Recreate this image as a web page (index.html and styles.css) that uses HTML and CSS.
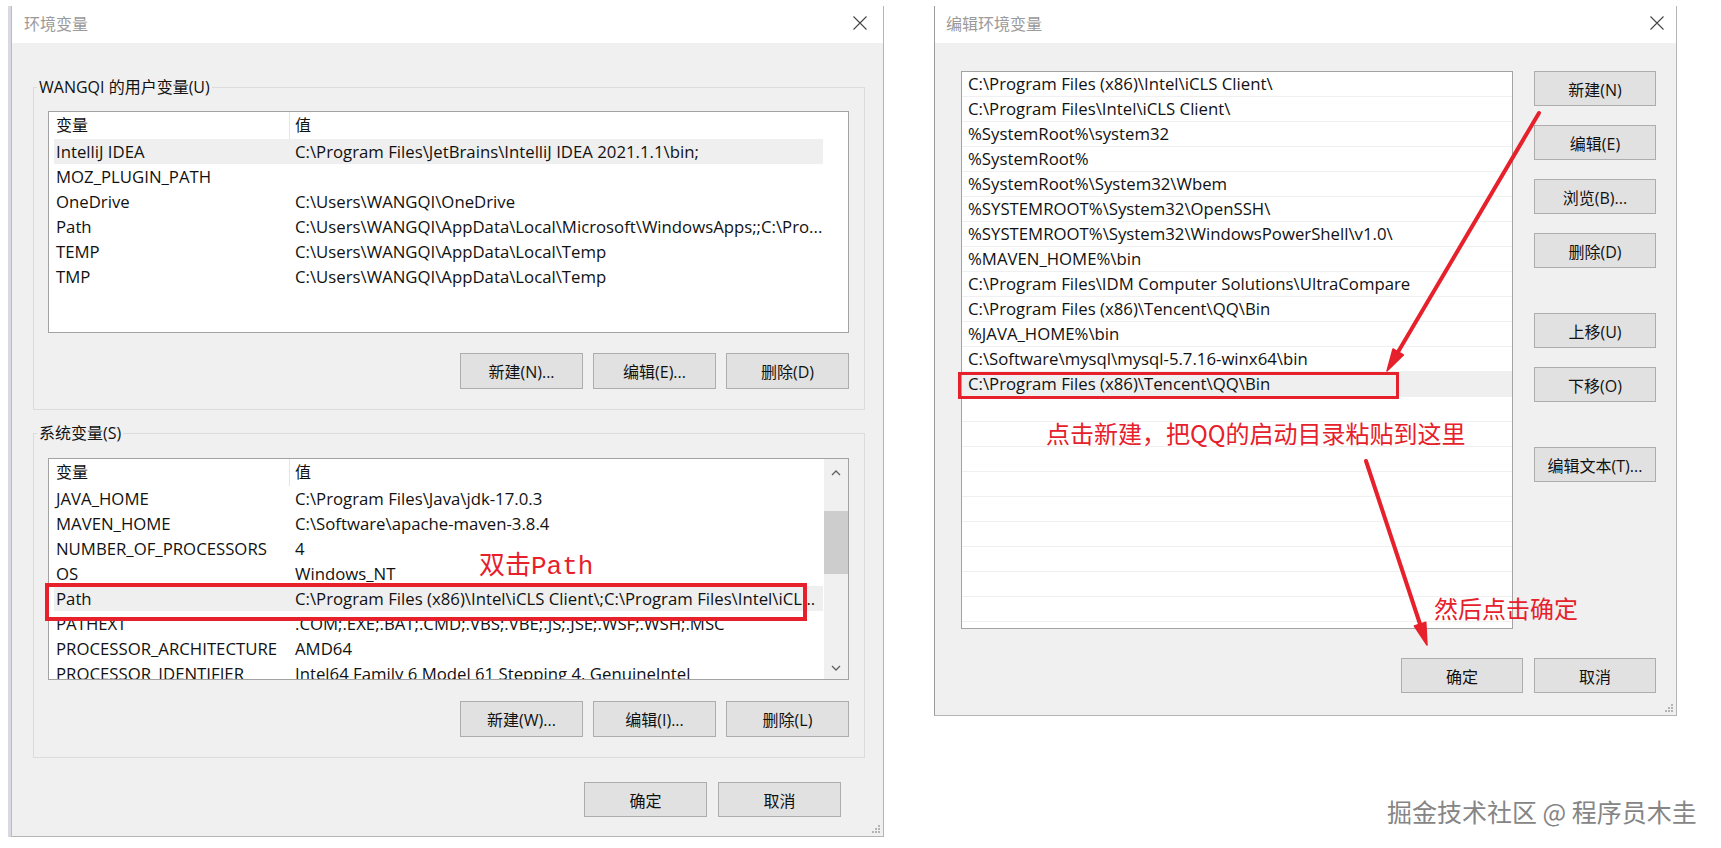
FILE: index.html
```html
<!DOCTYPE html>
<html lang="zh-CN">
<head>
<meta charset="utf-8">
<title>环境变量</title>
<link rel="stylesheet" href="styles.css">
</head>
<body>
<div class="stage">

  <!-- 环境变量 dialog -->
  <section class="win win-env">
    <header class="titlebar">
      <span class="title">环境变量</span>
      <svg class="close" width="14" height="14" viewBox="0 0 14 14"><path d="M0.5 0.5 L13.5 13.5 M13.5 0.5 L0.5 13.5" stroke="#444" stroke-width="1.1" fill="none"/></svg>
    </header>
    <div class="win-body env-body">

      <div class="group">
        <span class="legend">WANGQI 的用户变量(U)</span>
        <div class="listview">
          <div class="lv-main">
            <div class="lv-head"><span class="c1">变量</span><span class="c2">值</span></div>
            <div class="lv-row sel"><span class="c1">IntelliJ IDEA</span><span class="c2">C:\Program Files\JetBrains\IntelliJ IDEA 2021.1.1\bin;</span></div>
            <div class="lv-row"><span class="c1">MOZ_PLUGIN_PATH</span><span class="c2"></span></div>
            <div class="lv-row"><span class="c1">OneDrive</span><span class="c2">C:\Users\WANGQI\OneDrive</span></div>
            <div class="lv-row"><span class="c1">Path</span><span class="c2">C:\Users\WANGQI\AppData\Local\Microsoft\WindowsApps;;C:\Pro...</span></div>
            <div class="lv-row"><span class="c1">TEMP</span><span class="c2">C:\Users\WANGQI\AppData\Local\Temp</span></div>
            <div class="lv-row"><span class="c1">TMP</span><span class="c2">C:\Users\WANGQI\AppData\Local\Temp</span></div>
          </div>
        </div>
        <div class="btn-row">
          <button class="btn">新建(N)...</button>
          <button class="btn">编辑(E)...</button>
          <button class="btn">删除(D)</button>
        </div>
      </div>

      <div class="group group-sys">
        <span class="legend">系统变量(S)</span>
        <div class="listview">
          <div class="lv-main">
            <div class="lv-head"><span class="c1">变量</span><span class="c2">值</span></div>
            <div class="lv-row"><span class="c1">JAVA_HOME</span><span class="c2">C:\Program Files\Java\jdk-17.0.3</span></div>
            <div class="lv-row"><span class="c1">MAVEN_HOME</span><span class="c2">C:\Software\apache-maven-3.8.4</span></div>
            <div class="lv-row"><span class="c1">NUMBER_OF_PROCESSORS</span><span class="c2">4</span></div>
            <div class="lv-row"><span class="c1">OS</span><span class="c2">Windows_NT</span></div>
            <div class="lv-row sel"><span class="c1">Path</span><span class="c2">C:\Program Files (x86)\Intel\iCLS Client\;C:\Program Files\Intel\iCL...</span></div>
            <div class="lv-row"><span class="c1">PATHEXT</span><span class="c2">.COM;.EXE;.BAT;.CMD;.VBS;.VBE;.JS;.JSE;.WSF;.WSH;.MSC</span></div>
            <div class="lv-row"><span class="c1">PROCESSOR_ARCHITECTURE</span><span class="c2">AMD64</span></div>
            <div class="lv-row"><span class="c1">PROCESSOR_IDENTIFIER</span><span class="c2">Intel64 Family 6 Model 61 Stepping 4, GenuineIntel</span></div>
          </div>
          <div class="vscroll">
            <div class="sb-arrow sb-up"><svg width="10" height="6" viewBox="0 0 10 6"><path d="M1 5 L5 1 L9 5" stroke="#606060" stroke-width="1.3" fill="none"/></svg></div>
            <div class="sb-thumb"></div>
            <div class="sb-arrow sb-down"><svg width="10" height="6" viewBox="0 0 10 6"><path d="M1 1 L5 5 L9 1" stroke="#606060" stroke-width="1.3" fill="none"/></svg></div>
          </div>
        </div>
        <div class="btn-row">
          <button class="btn">新建(W)...</button>
          <button class="btn">编辑(I)...</button>
          <button class="btn">删除(L)</button>
        </div>
      </div>

      <div class="footer env-footer">
        <button class="btn btn-footer">确定</button>
        <button class="btn btn-footer">取消</button>
      </div>
    </div>
    <svg class="grip" width="10" height="10" viewBox="0 0 10 10"><path d="M7 1h2v2h-2z M4 4h2v2h-2z M7 4h2v2h-2z M1 7h2v2h-2z M4 7h2v2h-2z M7 7h2v2h-2z" fill="#b4b4b4"/></svg>
  </section>

  <!-- 编辑环境变量 dialog -->
  <section class="win win-edit">
    <header class="titlebar titlebar-edit">
      <span class="title">编辑环境变量</span>
      <svg class="close" width="14" height="14" viewBox="0 0 14 14"><path d="M0.5 0.5 L13.5 13.5 M13.5 0.5 L0.5 13.5" stroke="#444" stroke-width="1.1" fill="none"/></svg>
    </header>
    <div class="win-body edit-body">
      <div class="edit-main">
        <div class="pathlist">
          <div class="pl-row">C:\Program Files (x86)\Intel\iCLS Client\</div>
          <div class="pl-row">C:\Program Files\Intel\iCLS Client\</div>
          <div class="pl-row">%SystemRoot%\system32</div>
          <div class="pl-row">%SystemRoot%</div>
          <div class="pl-row">%SystemRoot%\System32\Wbem</div>
          <div class="pl-row">%SYSTEMROOT%\System32\OpenSSH\</div>
          <div class="pl-row">%SYSTEMROOT%\System32\WindowsPowerShell\v1.0\</div>
          <div class="pl-row">%MAVEN_HOME%\bin</div>
          <div class="pl-row">C:\Program Files\IDM Computer Solutions\UltraCompare</div>
          <div class="pl-row">C:\Program Files (x86)\Tencent\QQ\Bin</div>
          <div class="pl-row">%JAVA_HOME%\bin</div>
          <div class="pl-row">C:\Software\mysql\mysql-5.7.16-winx64\bin</div>
          <div class="pl-row sel">C:\Program Files (x86)\Tencent\QQ\Bin</div>
          <div class="pl-row"></div>
          <div class="pl-row"></div>
          <div class="pl-row"></div>
          <div class="pl-row"></div>
          <div class="pl-row"></div>
          <div class="pl-row"></div>
          <div class="pl-row"></div>
          <div class="pl-row"></div>
          <div class="pl-row"></div>
          <div class="pl-row"></div>
        </div>
        <div class="side-btns">
          <button class="btn btn-side">新建(N)</button>
          <button class="btn btn-side">编辑(E)</button>
          <button class="btn btn-side">浏览(B)...</button>
          <button class="btn btn-side">删除(D)</button>
          <button class="btn btn-side gap-before">上移(U)</button>
          <button class="btn btn-side">下移(O)</button>
          <button class="btn btn-side gap-before">编辑文本(T)...</button>
        </div>
      </div>
      <div class="footer edit-footer">
        <button class="btn btn-side">确定</button>
        <button class="btn btn-side">取消</button>
      </div>
    </div>
    <svg class="grip" width="10" height="10" viewBox="0 0 10 10"><path d="M7 1h2v2h-2z M4 4h2v2h-2z M7 4h2v2h-2z M1 7h2v2h-2z M4 7h2v2h-2z M7 7h2v2h-2z" fill="#b4b4b4"/></svg>
  </section>

  <!-- red annotations drawn over both dialogs -->
  <div class="mark mark-path"></div>
  <div class="mark mark-qq"></div>
  <div class="note note-dbl">双击Path</div>
  <div class="note note-new">点击新建，把QQ的启动目录粘贴到这里</div>
  <div class="note note-ok">然后点击确定</div>
  <svg class="arrows" width="1721" height="848" viewBox="0 0 1721 848">
    <g stroke="#e6212b" stroke-width="4" stroke-linecap="round" fill="#e6212b">
      <line x1="1539" y1="113" x2="1398" y2="352"/>
      <polygon points="1387,371 1403.4,355 1393,349" stroke-width="1.5" stroke-linejoin="round"/>
      <line x1="1366" y1="461" x2="1420" y2="624"/>
      <polygon points="1427,645 1425.8,622.2 1414.4,626" stroke-width="1.5" stroke-linejoin="round"/>
    </g>
  </svg>
  <div class="watermark">掘金技术社区 @ 程序员木圭</div>
</div>
</body>
</html>
```

FILE: styles.css
```css
html, body {
  margin: 0;
  padding: 0;
  background: #ffffff;
}

body {
  font-family: "Open Sans", "Noto Sans CJK SC", sans-serif;
  font-size: 16px;
  color: #111;
}

.stage {
  position: relative;
  width: 1721px;
  height: 848px;
  box-sizing: border-box;
  padding: 6px 0 0 11px;
  display: flex;
  align-items: flex-start;
  gap: 50px;
  overflow: hidden;
}

/* ---------- window frame ---------- */
.win {
  position: relative;
  background: #f0f0f0;
  border: 1px solid #b5b5b5;
  border-top: none;
  display: flex;
  flex-direction: column;
}

.win-env {
  width: 873px;
  box-sizing: border-box;
  border-left-color: #b9bbc6;
  box-shadow: -3px 0 0 #d8d9e1;
}

.win-edit {
  width: 743px;
  height: 710px;
  box-sizing: border-box;
  border-left-color: #9c9c9c;
}

.titlebar {
  height: 37px;
  box-sizing: border-box;
  background: #ffffff;
  display: flex;
  align-items: center;
  justify-content: space-between;
  padding: 0 16px 3px 12px;
}

.titlebar-edit {
  padding: 0 12px 3px 11px;
}

.title {
  font-family: "Noto Sans CJK SC", sans-serif;
  font-size: 16px;
  color: #9a9a9a;
}

.close {
  display: block;
}

.grip {
  position: absolute;
  right: 2px;
  bottom: 2px;
}

/* ---------- 环境变量 body ---------- */
.env-body {
  padding: 44px 18px 19px 21px;
  display: flex;
  flex-direction: column;
}

.group {
  border: 1px solid #dcdcdc;
  padding: 0 15px 20px 14px;
  display: flex;
  flex-direction: column;
}

.group-sys {
  margin-top: 23px;
}

.legend {
  align-self: flex-start;
  margin: -12px 0 0 -11px;
  padding: 0 2px;
  line-height: 22px;
  height: 22px;
  background: #f0f0f0;
  color: #111;
  font-size: 16px;
}

.listview {
  margin-top: 13px;
  height: 222px;
  box-sizing: border-box;
  border: 1px solid #a2a2a2;
  background: #ffffff;
  display: flex;
  overflow: hidden;
}

.group-sys .listview {
  margin-top: 14px;
}

.lv-main {
  width: 769px;
  padding-left: 5px;
  flex: none;
}

.lv-head,
.lv-row {
  display: flex;
  white-space: nowrap;
}

.lv-head {
  height: 27px;
  line-height: 27px;
}

.lv-row {
  height: 25px;
  line-height: 25px;
  font-size: 16.75px;
}

.lv-row.sel {
  background: #efefef;
}

.c1 {
  width: 236px;
  flex: none;
  box-sizing: border-box;
  padding-left: 2px;
  overflow: hidden;
}

.lv-head .c1 {
  border-right: 1px solid #e5e5e5;
}

.c2 {
  flex: 1;
  padding-left: 5px;
  overflow: hidden;
}

/* vertical scroll bar of the system list */
.vscroll {
  flex: 1;
  margin-left: 1px;
  background: #f0f0f0;
  display: flex;
  flex-direction: column;
}

.sb-arrow {
  display: flex;
  align-items: center;
  justify-content: center;
}

.sb-up {
  height: 27px;
}

.sb-thumb {
  margin-top: 25px;
  height: 63px;
  background: #cdcdcd;
}

.sb-down {
  margin-top: auto;
  height: 23px;
}

.btn-row {
  margin-top: 20px;
  display: flex;
  justify-content: flex-end;
  gap: 10px;
}

.group-sys .btn-row {
  margin-top: 21px;
}

/* ---------- buttons ---------- */
.btn {
  font-family: "Open Sans", "Noto Sans CJK SC", sans-serif;
  font-size: 16px;
  color: #111;
  background: #e1e1e1;
  border: 1px solid #adadad;
  border-radius: 0;
  margin: 0;
  padding: 0;
  width: 123px;
  height: 36px;
  box-sizing: border-box;
}

.btn-footer {
  height: 35px;
}

.footer {
  display: flex;
  justify-content: flex-end;
  gap: 11px;
}

.env-footer {
  margin-top: 24px;
  margin-right: 24px;
}

/* ---------- 编辑环境变量 body ---------- */
.edit-body {
  flex: 1;
  padding: 28px 20px 22px 26px;
  display: flex;
  flex-direction: column;
}

.edit-main {
  display: flex;
  gap: 21px;
}

.pathlist {
  width: 552px;
  height: 558px;
  box-sizing: border-box;
  border: 1px solid #a2a2a2;
  background: #ffffff;
  overflow: hidden;
}

.pl-row {
  height: 25px;
  line-height: 24px;
  box-sizing: border-box;
  border-bottom: 1px solid #f0f0f0;
  padding-left: 6px;
  font-size: 16.75px;
  white-space: nowrap;
}

.pl-row.sel {
  background: #efefef;
}

.side-btns {
  display: flex;
  flex-direction: column;
  gap: 19px;
}

.btn-side {
  width: 122px;
  height: 35px;
}

.side-btns .gap-before {
  margin-top: 26px;
}

.edit-footer {
  margin-top: 29px;
}

/* ---------- red annotations ---------- */
.mark {
  position: absolute;
  box-sizing: border-box;
  border: 4px solid #e6212b;
}

.mark-path {
  left: 45px;
  top: 583px;
  width: 762px;
  height: 38px;
}

.mark-qq {
  left: 958px;
  top: 372px;
  width: 441px;
  height: 27px;
  border-width: 3px;
}

.note {
  position: absolute;
  color: #e6212b;
  white-space: nowrap;
  font-family: "Noto Sans CJK SC", sans-serif;
  font-size: 24px;
  line-height: 30px;
}

.note-dbl {
  left: 479px;
  top: 551px;
  font-family: "Liberation Mono", "Noto Sans CJK SC", monospace;
  font-size: 26px;
  line-height: 32px;
}

.note-new {
  left: 1046px;
  top: 418px;
}

.note-ok {
  left: 1434px;
  top: 593px;
}

.arrows {
  position: absolute;
  left: 0;
  top: 0;
  pointer-events: none;
}

.watermark {
  position: absolute;
  left: 1387px;
  top: 795px;
  font-family: "Noto Sans CJK SC", sans-serif;
  font-size: 25px;
  line-height: 32px;
  color: #858585;
  white-space: nowrap;
  text-shadow: 0 0 1px #ffffff;
}
```
